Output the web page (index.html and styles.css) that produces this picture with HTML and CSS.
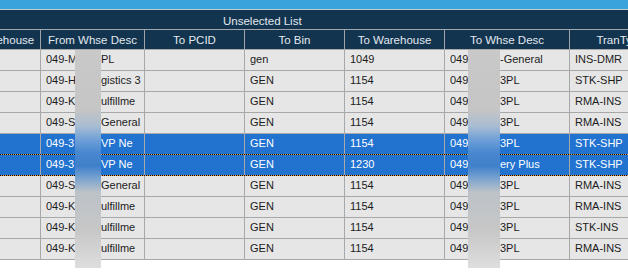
FILE: index.html
```html
<!DOCTYPE html>
<html lang="en">
<head>
    <meta charset="UTF-8">
    <meta name="viewport" content="width=device-width, initial-scale=1.0">
    <title>Transfer Lines</title>
    <link rel="stylesheet" href="styles.css">
</head>
<body>
    <div class="topbar"></div>

    <div class="list">
        <div class="list-title">Unselected List</div>

        <!-- grid is scrolled sideways, first column only partly in view -->
        <div class="viewport">
            <div class="grid">
                <div class="row head">
                    <div class="cell">From Warehouse</div>
                    <div class="cell">From Whse Desc</div>
                    <div class="cell">To PCID</div>
                    <div class="cell">To Bin</div>
                    <div class="cell">To Warehouse</div>
                    <div class="cell">To Whse Desc</div>
                    <div class="cell">TranType</div>
                </div>

                <div class="row">
                    <div class="cell"></div>
                    <div class="cell"><span class="cut">049-M</span>PL</div>
                    <div class="cell"></div>
                    <div class="cell">gen</div>
                    <div class="cell">1049</div>
                    <div class="cell"><span class="cut-to">049</span>-General</div>
                    <div class="cell">INS-DMR</div>
                </div>
                <div class="row">
                    <div class="cell"></div>
                    <div class="cell"><span class="cut">049-H</span>gistics 3</div>
                    <div class="cell"></div>
                    <div class="cell">GEN</div>
                    <div class="cell">1154</div>
                    <div class="cell"><span class="cut-to">049</span>3PL</div>
                    <div class="cell">STK-SHP</div>
                </div>
                <div class="row">
                    <div class="cell"></div>
                    <div class="cell"><span class="cut">049-K</span>ulfillme</div>
                    <div class="cell"></div>
                    <div class="cell">GEN</div>
                    <div class="cell">1154</div>
                    <div class="cell"><span class="cut-to">049</span>3PL</div>
                    <div class="cell">RMA-INS</div>
                </div>
                <div class="row">
                    <div class="cell"></div>
                    <div class="cell"><span class="cut">049-S</span>General</div>
                    <div class="cell"></div>
                    <div class="cell">GEN</div>
                    <div class="cell">1154</div>
                    <div class="cell"><span class="cut-to">049</span>3PL</div>
                    <div class="cell">RMA-INS</div>
                </div>
                <div class="row selected">
                    <div class="cell"></div>
                    <div class="cell"><span class="cut">049-3</span>VP Ne</div>
                    <div class="cell"></div>
                    <div class="cell">GEN</div>
                    <div class="cell">1154</div>
                    <div class="cell"><span class="cut-to">049</span>3PL</div>
                    <div class="cell">STK-SHP</div>
                </div>
                <div class="row selected focused">
                    <div class="cell"></div>
                    <div class="cell"><span class="cut">049-3</span>VP Ne</div>
                    <div class="cell"></div>
                    <div class="cell">GEN</div>
                    <div class="cell">1230</div>
                    <div class="cell"><span class="cut-to">049</span>ery Plus</div>
                    <div class="cell">STK-SHP</div>
                </div>
                <div class="row">
                    <div class="cell"></div>
                    <div class="cell"><span class="cut">049-S</span>General</div>
                    <div class="cell"></div>
                    <div class="cell">GEN</div>
                    <div class="cell">1154</div>
                    <div class="cell"><span class="cut-to">049</span>3PL</div>
                    <div class="cell">RMA-INS</div>
                </div>
                <div class="row">
                    <div class="cell"></div>
                    <div class="cell"><span class="cut">049-K</span>ulfillme</div>
                    <div class="cell"></div>
                    <div class="cell">GEN</div>
                    <div class="cell">1154</div>
                    <div class="cell"><span class="cut-to">049</span>3PL</div>
                    <div class="cell">RMA-INS</div>
                </div>
                <div class="row">
                    <div class="cell"></div>
                    <div class="cell"><span class="cut">049-K</span>ulfillme</div>
                    <div class="cell"></div>
                    <div class="cell">GEN</div>
                    <div class="cell">1154</div>
                    <div class="cell"><span class="cut-to">049</span>3PL</div>
                    <div class="cell">STK-INS</div>
                </div>
                <div class="row">
                    <div class="cell"></div>
                    <div class="cell"><span class="cut">049-K</span>ulfillme</div>
                    <div class="cell"></div>
                    <div class="cell">GEN</div>
                    <div class="cell">1154</div>
                    <div class="cell"><span class="cut-to">049</span>3PL</div>
                    <div class="cell">RMA-INS</div>
                </div>
            </div>
        </div>

        <!-- blurred-out warehouse names -->
        <div class="mask mask-from"></div>
        <div class="mask mask-to"></div>
    </div>
</body>
</html>
```

FILE: styles.css
```css
html, body {
    margin: 0;
    padding: 0;
    background-color: #fff;
}

body {
    min-height: 100vh;
    font-family: "Liberation Sans", Arial, sans-serif;
    overflow: hidden;
}

.topbar {
    height: 9px;
    background-color: #3aa3dc;
    border-bottom: 1px solid #c4ccd4;
}

.list {
    position: relative;
}

.list-title {
    height: 20px;
    box-sizing: border-box;
    padding: 2px 0 0 223px;
    line-height: 18px;
    font-size: 11.5px;
    color: #e2e8ee;
    background-color: #12344f;
    border-bottom: 1px solid #a4a8ac;
}

.viewport {
    overflow: hidden;
}

.grid {
    margin-left: -60px;
    width: 740px;
}

.row {
    display: grid;
    grid-template-columns: 101px 104px 100px 100px 100px 125px 102px;
    height: 21px;
    box-sizing: border-box;
    border-bottom: 1px solid #a8a8a8;
    background-color: #e6e6e6;
    color: #1c1c1c;
    font-size: 11px;
}

.cell {
    border-right: 1px solid #a8a8a8;
    padding: 0 5px;
    line-height: 18px;
    white-space: nowrap;
    overflow: hidden;
}

.head {
    height: 20px;
    background-color: #12344f;
    color: #e2e8ee;
    font-size: 11.5px;
}

.head .cell {
    text-align: center;
    padding-top: 1px;
    border-right-color: #9ea4aa;
}

.selected {
    background-color: #2272d0;
    color: #fff;
}

/* focus rectangle: dotted black/orange lines above and below */
.focused {
    position: relative;
}

.focused::before,
.focused::after {
    content: "";
    position: absolute;
    left: 0;
    right: 0;
    height: 1px;
    background: repeating-linear-gradient(90deg, #000 0 1px, #eea040 1px 2px);
}

.focused::before {
    top: -1px;
}

.focused::after {
    bottom: -1px;
}

.cut {
    display: inline-block;
    width: 55px;
    overflow: hidden;
    vertical-align: top;
}

.cut-to {
    display: inline-block;
    width: 50px;
    overflow: hidden;
    vertical-align: top;
}

.mask {
    position: absolute;
    top: 40px;
    height: 218px;
    background: linear-gradient(180deg,
        #c9c9c9 0px,
        #c5c5c5 60px,
        #a9bdd2 76px,
        #6e9fd8 90px,
        #4a88d0 102px,
        #3f80cb 116px,
        #77a2cf 128px,
        #bcc2c8 142px,
        #c7c7c7 180px,
        #dedede 218px);
}

.mask-from {
    left: 75px;
    width: 26px;
}

.mask-to {
    left: 468px;
    width: 32px;
}
```
